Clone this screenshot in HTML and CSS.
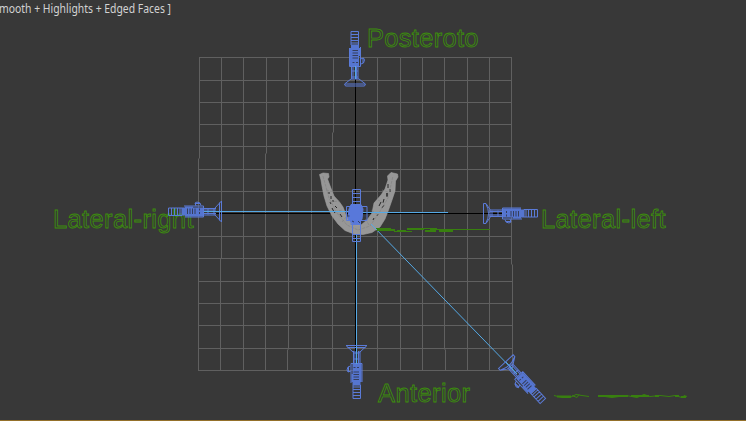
FILE: index.html
```
<!DOCTYPE html>
<html lang="en">
<head>
<meta charset="utf-8">
<title>Viewport</title>
<link rel="stylesheet" href="styles.css">
</head>
<body>
<main class="viewport">
<svg class="scene" viewBox="0 0 746 421" width="746" height="421">
  <defs>
    <g id="tube">
      <path d="M-4 .5H3.500V14H-4ZM-4 3.500H3.500M-4 6.500H3.500M-4 9.500H3.500M-4 12H3.500"/>
      <path class="solid" d="M-4 14H4V17H5V25H4V35H-5V17H-4Z"/>
      <path class="gap" d="M-2.500 19.500H3M-2.500 22H3M-2.500 24.500H3M-2.500 27H3M-2.500 31.500H-.5M1 31.500H3"/>
      <path d="M5.500 16V35.500H-5.500V17M5.500 28L8.500 27L9.500 29L8.500 32L6 33M8 27V32M-3.500 36V48M3 36V48M-2 36V48M1.500 36V48M-3 40H3M-3 46H3"/>
    </g>
    <g id="camera" class="camera">
      <use href="#tube"/>
      <path d="M-4 48H4L10.500 53L9.500 55H-9.500L-10.500 53ZM-10 53H10"/>
    </g>
    <g id="camera-cone" class="camera">
      <use href="#tube"/>
      <path d="M-3 46.500L-10.500 53.500H10.500L3 46.500M-9 51.500H9"/>
    </g>
    <g id="camera-cup" class="camera">
      <use href="#tube"/>
      <path d="M-4 48L-10 52V54.500H10V52L4 48ZM-9.500 52Q0 47 9.500 52"/>
    </g>
  </defs>

  <text class="caption" x="-1" y="13" textLength="172" lengthAdjust="spacingAndGlyphs">mooth + Highlights + Edged Faces ]</text>

  <path class="grid" d="M199 57.500H512M199 80.500H512M199 102.500H512M199 124.500H512M199 146.500H512M199 169.500H512M199 191.500H512M199 236.500H512M198 258.500H512M198 281.500H512M198 303.500H512M198 325.500H513M198 348.500H513M198 370.500H513"/>
  <path class="grid" d="M199.500 57V158L198.500 159V371M221.500 57V258L220.500 259V371M243.500 57V371M266.500 57V153L265.500 154V371M288.500 57V349L287.500 350V371M311.500 57V371M333.500 57V132L332.500 133V371M377.500 57V371M400.500 57V371M422.500 57V371M444.500 57V349L445.500 350V371M467.500 57V371M489.500 57V371M511.500 57V264L512.500 265V371"/>
  <path class="axis" d="M355.500 57V371M198 213.500H512"/>

  <g class="label">
    <text x="367" y="46.500" textLength="111.500">Posteroto</text>
    <text x="53" y="227.500" textLength="140.500">Lateral-right</text>
    <text x="541" y="227.500" textLength="124.500">Lateral-left</text>
    <text x="378" y="402" textLength="92">Anterior</text>
  </g>

  <path class="jaw" d="M319.500 174.500L323 173L328.500 173.500L329 177L327.500 179L330.500 187L334 196L339.500 202L343 207L346 215L350 221L356 225L361 225L367 220L372 213L374 203L381 195L385 189L388 180L387.500 176L391 172.500L397.500 174L398 177L395.500 181L395 191L392 200L388.500 210L385 219L380 227L372 232.500L363 234.500L354 234L345 230.500L338 224L332 216L327 206L324 196L322 186L321 180Z"/>
  <path class="pits" d="M388 184v4m2 1v3m-3 1v4m-3 2l-1 4m-2-1l-2 4m5-1l-2 3m5-15v3M329 192v2m2 2v3m2 1v2m-3 0l1 2m4 2l2 2m-4 2l2 3m-3-5l1 2M378 214l-1 2m-3 2l-1 2M340 214l2 3"/>
  <path class="edges" d="M323 176L329 198L337 213L347 225L358 230L370 226L379 213L388 198L393 176M326 190l8 2m-4 10l9-1m-4 11l7-2m0 12l5-6m8 9l1-6m13 6l-4-7m13-3l-7-5m13-7l-6-3m10-8l-6-2"/>

  <rect class="beam" x="190" y="211" width="166" height="1"/>
  <rect class="beam" x="356" y="212" width="92" height="1"/>
  <rect class="beam" x="356" y="234" width="1" height="130"/>
  <path class="ray" d="M371 224L517 374"/>

  <g class="camera">
    <path d="M352.500 189.500H360.500V241.500H352.500ZM353 193.500H360M353 197.500H360M353 201.500H360M353 234.500H360M353 238.500H360M346.500 206.500H351V204.500H361V206.500H367V220.500H360V224.500H351V220.500H346.500Z"/>
    <path class="hub" d="M349 209L351 205H361L363 209L362 219L359 224H353L348 219Z"/>
    <path class="gap" d="M364 210h2M363 216h3M352 221l2 1m4-1l2 2M347.500 216h2"/>
  </g>

  <rect class="streak" x="430" y="229" width="60" height="1"/>
  <g class="flat">
    <path d="M377 230h18m2 1h9m1-2h17m1 2h11m3-1h14"/>
    <path class="hair" d="M376 228.500h15m3 3h18m5-3h20m2 3h14"/>
    <path d="M557 396.500h14M598 396h30m3 0h18m6 0h4m16 0h4m2 1h5"/>
    <path class="hair" d="M554 395.500L562 397.500H570L576 394.500L582 395.500L589 396.500M572 395.500L577 397.500L579 394.500M598 395.500L612 397.500L626 395.500L637 397.500L644 394.500L650 396.500L660 395.500L669 396.500L675 395.500L682 397.500L684 395.500L687 396.500"/>
  </g>

  <use href="#camera" transform="translate(355 31)"/>
  <use href="#camera-cone" transform="translate(168 211.500) rotate(-90)"/>
  <use href="#camera-cup" transform="translate(538 213.500) rotate(90)"/>
  <use href="#camera-cone" transform="translate(356.500 399) rotate(180)"/>
  <use href="#camera-cup" transform="translate(543 401.500) rotate(137)"/>
  <rect class="beam" x="355" y="66" width="1" height="13"/>
  <rect class="beam" x="205" y="211" width="17" height="1"/>
  <rect class="beam" x="356" y="346" width="1" height="18"/>
  <path class="ray" d="M506 362L517 374"/>
</svg>
</main>
</body>
</html>
```
FILE: styles.css
```
body {
  margin: 0;
  background: #383838;
}

.viewport {
  box-sizing: border-box;
  width: 746px;
  height: 421px;
  overflow: hidden;
  border-bottom: 1px solid #94702a;
}

.scene {
  display: block;
  fill: none;
}

.caption {
  fill: #d2d2d2;
  font: 12px "Noto Sans", sans-serif;
}

.grid {
  stroke: #606060;
}

.axis {
  stroke: #000;
}

.label {
  font: 25.5px "Liberation Sans", sans-serif;
  stroke: #3c8e0c;
  stroke-width: 0.85;
}

.jaw {
  fill: #979797;
  stroke: #a1a1a1;
  stroke-width: 0.6;
}

.pits {
  stroke: #262626;
}

.edges {
  stroke: #808080;
  stroke-width: 0.6;
  stroke-dasharray: 3 1;
}

.camera {
  stroke: #5b7bd8;
  stroke-width: 1;
}

.solid {
  fill: #5575d0;
  stroke: none;
}

.hub {
  fill: #5878da;
}

.gap {
  stroke: #353e5c;
}

.ray {
  stroke: #55a9e5;
}

.beam {
  fill: #55a9e5;
}

.streak {
  fill: #38800f;
}

.flat {
  stroke: #38800f;
  stroke-width: 2;
}

.flat .hair {
  stroke-width: 1;
}
```
